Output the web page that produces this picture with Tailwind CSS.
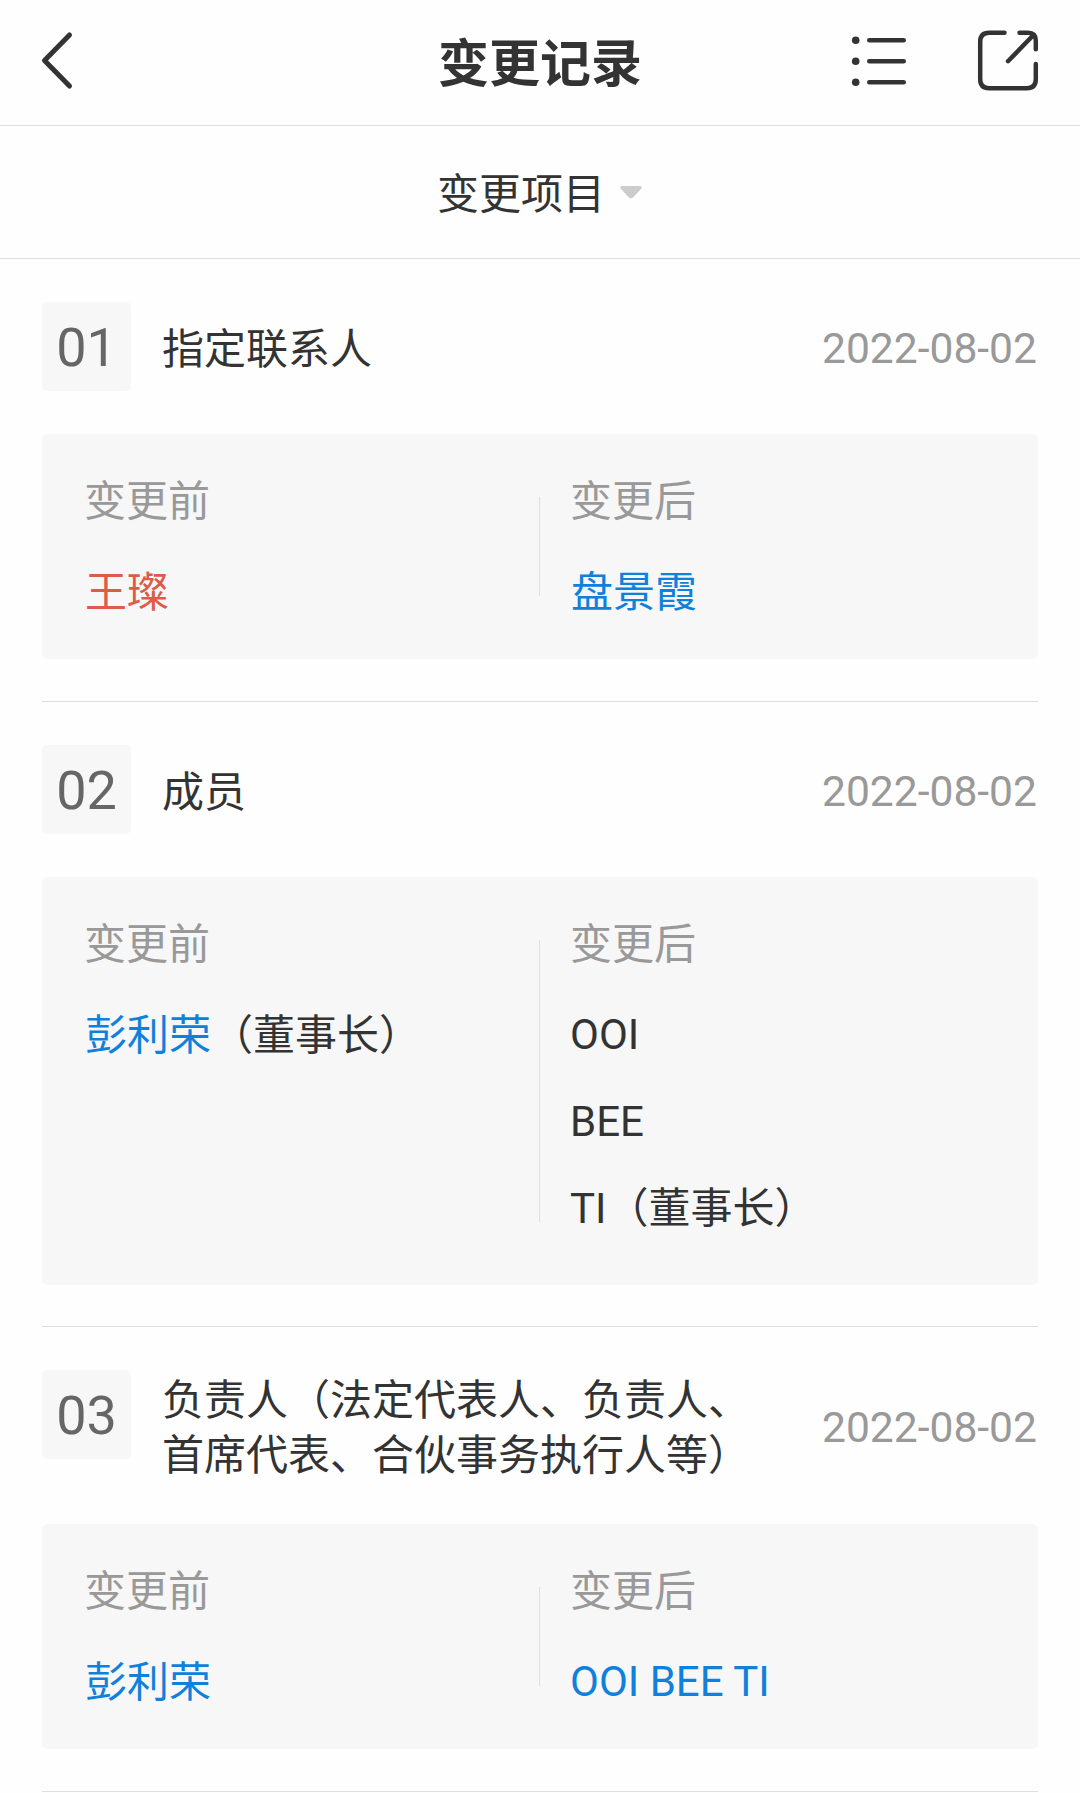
<!DOCTYPE html>
<html lang="zh-CN">
<head>
<meta charset="utf-8">
<title>变更记录</title>
<script src="https://cdn.jsdelivr.net/npm/@tailwindcss/browser@4"></script>
</head>
<body class="bg-[#fefefe] w-[1080px] h-[1793px] overflow-hidden text-[42px] leading-[50px] text-[#333] font-[Roboto,'Noto_Sans_CJK_SC',sans-serif]">
  <header class="h-[126px] border-b border-[#dedede] grid grid-cols-[1fr_auto_1fr] items-center pl-[38px] pr-[38px]">
    <svg class="w-9 h-16" viewBox="0 0 36 64" fill="none" stroke="#333" stroke-width="5" stroke-linecap="round" stroke-linejoin="round"><path d="M31.500 4L6.500 29.500L31.500 55"/></svg>
    <h1 class="text-[51px] leading-[60px] font-bold pt-1">变更记录</h1>
    <div class="flex justify-end items-center gap-[68px]">
      <svg class="w-16 h-16 overflow-visible" viewBox="848 30.500 64 64" fill="none" stroke="#333" stroke-width="4.600" stroke-linecap="round"><path d="M869.300 39.700H903.700M869.300 60.700H903.700M869.300 81.700H903.700"/><g fill="#333" stroke="none"><circle cx="855.700" cy="39.700" r="3.800"/><circle cx="855.700" cy="60.700" r="3.800"/><circle cx="855.700" cy="81.700" r="3.800"/></g></svg>
      <svg class="w-[62px] h-16 overflow-visible" viewBox="980 30.500 62 64" fill="none" stroke="#333" stroke-width="4.500" stroke-linecap="round" stroke-linejoin="round"><path d="M1004.500 32.200H989.200Q980.200 32.200 980.200 41.200V78.800Q980.200 87.800 989.200 87.800H1026.800Q1035.800 87.800 1035.800 78.800V63.500M1019.500 32.200H1028Q1035.800 32.200 1035.800 40V48.800M1008 60.700L1033 35"/></svg>
    </div>
  </header>
  <div class="h-[133px] border-b border-[#dedede] flex items-center justify-center gap-[14px]">
    <span class="pt-[6px]">变更项目</span>
    <svg class="w-6 h-4 mt-[2px]" viewBox="0 0 24 16"><path fill="#ccc" d="M3 1H21Q24 2 22 4L14.500 12Q12 14.500 9.500 12L2 4Q0 2 3 1Z"/></svg>
  </div>
  <main class="px-[42px]">
    <section class="h-[443px] pt-[43px] border-b border-[#dedede]">
      <div class="flex items-center h-[89px]">
        <div class="w-[89px] h-[89px] pt-[3px] rounded-[5px] bg-[#f7f7f7] flex items-center justify-center text-[54px] text-[#666]">01</div>
        <h2 class="ml-[31px] flex-1 pt-[6px]">指定联系人</h2>
        <time class="text-[#999] text-[42.600px] pt-[3px] mr-px">2022-08-02</time>
      </div>
      <div class="mt-[43px] h-[225px] rounded-[6px] bg-[#f7f7f7] py-[42px] flex">
        <div class="w-[497px] shrink-0 pl-[42px]"><p class="pt-px text-[#999]">变更前</p><p class="ml-px mt-[22px] leading-[87px] text-[#dd5b48]">王璨</p></div>
        <div class="w-px my-[21px] bg-[#dedede]"></div>
        <div class="flex-1 pl-[30px]"><p class="pt-px text-[#999]">变更后</p><p class="ml-px mt-[22px] leading-[87px] text-[#0f80dc]">盘景霞</p></div>
      </div>
    </section>
    <section class="h-[625px] pt-[43px] border-b border-[#dedede]">
      <div class="flex items-center h-[89px]">
        <div class="w-[89px] h-[89px] pt-[3px] rounded-[5px] bg-[#f7f7f7] flex items-center justify-center text-[54px] text-[#666]">02</div>
        <h2 class="ml-[31px] flex-1 pt-[6px]">成员</h2>
        <time class="text-[#999] text-[42.600px] pt-[3px] mr-px">2022-08-02</time>
      </div>
      <div class="mt-[43px] h-[408px] rounded-[6px] bg-[#f7f7f7] py-[42px] flex">
        <div class="w-[497px] shrink-0 pl-[42px]"><p class="pt-px text-[#999]">变更前</p><p class="ml-px mt-[22px] leading-[87px]"><span class="text-[#0f80dc]">彭利荣</span>（董事长）</p></div>
        <div class="w-px my-[21px] bg-[#dedede]"></div>
        <div class="flex-1 pl-[30px]"><p class="pt-px text-[#999]">变更后</p><p class="mt-[21px] leading-[87px]">OOI<br>BEE<br>TI（董事长）</p></div>
      </div>
    </section>
    <section class="h-[465px] pt-[43px] border-b border-[#dedede]">
      <div class="flex items-start h-[111px]">
        <div class="w-[89px] h-[89px] pt-[3px] rounded-[5px] bg-[#f7f7f7] flex items-center justify-center text-[54px] text-[#666]">03</div>
        <h2 class="ml-[31px] flex-1 pt-[3px] leading-[55px] whitespace-nowrap">负责人（法定代表人、负责人、<br>首席代表、合伙事务执行人等）</h2>
        <time class="text-[#999] text-[42.600px] pt-[2px] mr-px self-center">2022-08-02</time>
      </div>
      <div class="mt-[43px] h-[225px] rounded-[6px] bg-[#f7f7f7] py-[42px] flex">
        <div class="w-[497px] shrink-0 pl-[42px]"><p class="pt-px text-[#999]">变更前</p><p class="ml-px mt-[22px] leading-[87px] text-[#0f80dc]">彭利荣</p></div>
        <div class="w-px my-[21px] bg-[#dedede]"></div>
        <div class="flex-1 pl-[30px]"><p class="pt-px text-[#999]">变更后</p><p class="mt-[21px] leading-[87px] text-[#0f80dc]">OOI BEE TI</p></div>
      </div>
    </section>
  </main>
</body>
</html>
